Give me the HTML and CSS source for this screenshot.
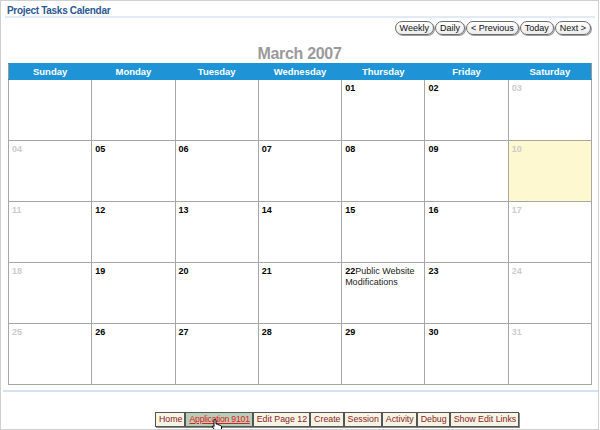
FILE: index.html
```html
<!DOCTYPE html>
<html>
<head>
<meta charset="utf-8">
<link rel="stylesheet" href="styles.css">
</head>
<body>
<div class="page">
  <div class="region-title">Project Tasks Calendar</div>
  <div class="nav">
    <span class="btn">Weekly</span>
    <span class="btn">Daily</span>
    <span class="btn">&lt; Previous</span>
    <span class="btn">Today</span>
    <span class="btn">Next &gt;</span>
  </div>
  <div class="month">March 2007</div>
  <table class="cal">
    <thead>
      <tr><th>Sunday</th><th>Monday</th><th>Tuesday</th><th>Wednesday</th><th>Thursday</th><th>Friday</th><th>Saturday</th></tr>
    </thead>
    <tbody>
      <tr><td></td><td></td><td></td><td></td><td><b>01</b></td><td><b>02</b></td><td class="off"><b>03</b></td></tr>
      <tr><td class="off"><b>04</b></td><td><b>05</b></td><td><b>06</b></td><td><b>07</b></td><td><b>08</b></td><td><b>09</b></td><td class="off today"><b>10</b></td></tr>
      <tr><td class="off"><b>11</b></td><td><b>12</b></td><td><b>13</b></td><td><b>14</b></td><td><b>15</b></td><td><b>16</b></td><td class="off"><b>17</b></td></tr>
      <tr><td class="off"><b>18</b></td><td><b>19</b></td><td><b>20</b></td><td><b>21</b></td><td><b>22</b><span class="task">Public Website Modifications</span></td><td><b>23</b></td><td class="off"><b>24</b></td></tr>
      <tr><td class="off"><b>25</b></td><td><b>26</b></td><td><b>27</b></td><td><b>28</b></td><td><b>29</b></td><td><b>30</b></td><td class="off"><b>31</b></td></tr>
    </tbody>
  </table>
  <div class="footer-line"></div>
  <div class="toolbar-wrap">
    <div class="toolbar">
      <span class="tb">Home</span>
      <span class="tb hover">Application 9101</span>
      <span class="tb">Edit Page 12</span>
      <span class="tb">Create</span>
      <span class="tb">Session</span>
      <span class="tb">Activity</span>
      <span class="tb">Debug</span>
      <span class="tb">Show Edit Links</span>
      <svg class="cursor" width="10" height="12" viewBox="0 0 10 12">
        <path d="M3 0.5 C3.8 0.5 4 1 4 1.6 V5 H5 C5.6 5 6 5.3 6 5.8 H7 C7.6 5.8 8 6.1 8 6.6 H8.5 C9.2 6.6 9.5 7 9.5 7.6 V10 C9.5 11 9 11.5 8 11.5 H4 C3.3 11.5 3 11.2 2.6 10.7 L0.5 8 C0.2 7.5 0.5 7 1 7 C1.4 7 1.7 7.2 2 7.6 V1.6 C2 1 2.2 0.5 3 0.5 Z" fill="#fff" stroke="#000" stroke-width="1"/>
      </svg>
    </div>
  </div>
</div>
</body>
</html>
```

FILE: styles.css
```css
html, body {
  margin: 0;
  padding: 0;
  background: #ffffff;
}
body {
  font-family: "Liberation Sans", Arial, sans-serif;
  font-size: 9px;
  color: #000;
}
.page {
  width: 597px;
  height: 428px;
  border: 1px solid #cfcfcf;
  position: relative;
  overflow: hidden;
}
.region-title {
  margin: 0 3px 0 4px;
  padding: 5px 0 0 2px;
  height: 10px;
  font-size: 10px;
  font-weight: bold;
  color: #2c5892;
  border-bottom: 2px solid #e2ebf5;
  line-height: 10px;
  letter-spacing: -0.3px;
}
.nav {
  display: flex;
  justify-content: flex-end;
  gap: 1px;
  margin-top: 3px;
  padding-right: 7px;
}
.btn {
  display: inline-flex;
  align-items: center;
  justify-content: center;
  height: 12px;
  padding: 0 4px;
  border: 1px solid #6b6b6b;
  border-radius: 7px;
  background: linear-gradient(#ffffff, #ececec);
  box-shadow: 1px 1px 0 #a0a0a0;
  font-size: 9px;
  color: #111;
  line-height: 12px;
}
.month {
  text-align: center;
  font-size: 16px;
  font-weight: bold;
  color: #9a9a9a;
  margin-top: 9px;
  height: 19px;
  line-height: 19px;
  letter-spacing: -0.3px;
}
.cal {
  margin: 0 0 0 7px;
  width: 584px;
  border-collapse: collapse;
  table-layout: fixed;
}
.cal th {
  background: #1e93d6;
  color: #ffffff;
  font-size: 9.5px;
  font-weight: bold;
  height: 15px;
  padding: 0;
  border: 1px solid #1e93d6;
  border-left: 1px solid #5a86aa;
  text-align: center;
  line-height: 15px;
}
.cal th:first-child {
  border-left: 1px solid #9a9a9a;
}
.cal th:last-child {
  border-right: 1px solid #9a9a9a;
}
.cal td {
  height: 57px;
  border: 1px solid #a6a6a6;
  vertical-align: top;
  padding: 3px 2px 0 3px;
  font-size: 9px;
  line-height: 11px;
  color: #222;
  background: #ffffff;
}
.cal td b {
  color: #000;
}
.cal td .task {
  color: #222;
}
.cal td.off b {
  color: #cccccc;
}
.cal td.today {
  background: #fdf8cf;
}
.footer-line {
  margin: 5px 0 0 2px;
  height: 0;
  border-top: 2px solid #d3e3f3;
}
.toolbar-wrap {
  display: flex;
  padding-left: 154px;
  margin-top: 20px;
}
.toolbar {
  display: flex;
  position: relative;
  border: 1px solid #555;
  box-shadow: 1px 1px 0 #888;
}
.tb {
  display: inline-block;
  height: 13px;
  line-height: 13px;
  padding: 0 2px 0 3px;
  font-size: 8.8px;
  color: #8a2323;
  background: #f6f4e4;
  border-left: 1px solid #555;
  border-right: 1px solid #555;
}
.tb:first-child {
  border-left: 0;
}
.tb:last-of-type {
  border-right: 0;
}
.tb.hover {
  background: #b7cdb7;
  color: #e21b1b;
  text-decoration: underline;
  letter-spacing: -0.3px;
}
.cursor {
  position: absolute;
  left: 56px;
  top: 6px;
}
```
